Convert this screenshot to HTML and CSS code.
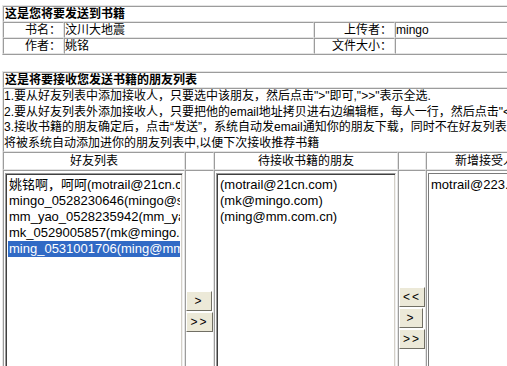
FILE: index.html
```html
<!DOCTYPE html>
<html lang="zh-CN">
<head>
  <meta charset="UTF-8">
  <title>发送书籍</title>
  <link rel="stylesheet" href="styles.css">
</head>
<body>

<table class="grid book-info">
  <colgroup><col class="c-label"><col class="c-value"><col class="c-label2"><col class="c-rest"></colgroup>
  <tr><td colspan="4" class="title">这是您将要发送到书籍</td></tr>
  <tr><td class="label">书名：</td><td>汶川大地震</td><td class="label">上传者：</td><td>mingo</td></tr>
  <tr><td class="label">作者：</td><td>姚铭</td><td class="label">文件大小：</td><td></td></tr>
</table>

<table class="grid friends">
  <colgroup><col class="c-list"><col class="c-btn"><col class="c-list2"><col class="c-btn2"><col class="c-new"></colgroup>
  <tr><td colspan="5" class="title">这是将要接收您发送书籍的朋友列表</td></tr>
  <tr><td colspan="5" class="help">1.要从好友列表中添加接收人，只要选中该朋友，然后点击"&gt;"即可,"&gt;&gt;"表示全选.<br>2.要从好友列表外添加接收人，只要把他的email地址拷贝进右边编辑框，每人一行，然后点击"&lt;"即可.<br>3.接收书籍的朋友确定后，点击“发送”，系统自动发email通知你的朋友下载，同时不在好友列表中的接收人<br>将被系统自动添加进你的朋友列表中,以便下次接收推荐书籍</td></tr>
  <tr class="heads"><td>好友列表</td><td></td><td>待接收书籍的朋友</td><td></td><td>新增接受人</td></tr>
  <tr class="lists">
    <td class="list-cell">
      <div class="listbox">
        <div class="item">姚铭啊，呵呵(motrail@21cn.com)</div>
        <div class="item">mingo_0528230646(mingo@sina.com)</div>
        <div class="item">mm_yao_0528235942(mm_yao@163.com)</div>
        <div class="item">mk_0529005857(mk@mingo.com)</div>
        <div class="item selected">ming_0531001706(ming@mm.com.cn)</div>
      </div>
    </td>
    <td class="btn-cell left-btns"><button>&gt;</button><button>&gt;&gt;</button></td>
    <td class="list-cell">
      <div class="listbox">
        <div class="item">(motrail@21cn.com)</div>
        <div class="item">(mk@mingo.com)</div>
        <div class="item">(ming@mm.com.cn)</div>
      </div>
    </td>
    <td class="btn-cell right-btns"><button>&lt;&lt;</button><button>&gt;</button><button>&gt;&gt;</button></td>
    <td class="list-cell"><div class="editbox">motrail@223.com</div></td>
  </tr>
</table>

</body>
</html>
```

FILE: styles.css
```css
body { margin: 0; padding: 5px 0 0 2px; background: #fff; color: #000; font-family: "Liberation Sans", "Noto Sans CJK SC", sans-serif; font-size: 12px; overflow: hidden; }
.grid { border-collapse: separate; border-spacing: 0; table-layout: fixed; width: 543px; border: 1px solid; border-color: #e4e4e4 #9c9c9c #9c9c9c #e4e4e4; }
.grid td { box-sizing: border-box; border: 1px solid; border-color: #9c9c9c #e4e4e4 #e4e4e4 #9c9c9c; padding: 0; line-height: 14px; white-space: nowrap; overflow: hidden; }
.grid .title { font-weight: bold; font-size: 12px; padding-left: 1px; }
.grid .label { text-align: right; padding-right: 2px; }

.book-info .c-label { width: 61px; }
.book-info .c-value { width: 250px; }
.book-info .c-label2 { width: 81px; }
.book-info .c-rest { width: 149px; }

.friends { margin-top: 16px; }
.friends .c-list { width: 182px; }
.friends .c-btn { width: 29px; }
.friends .c-list2 { width: 184px; }
.friends .c-btn2 { width: 28px; }
.friends .c-new { width: 118px; }
.friends .help { font-size: 12px; line-height: 15.5px; }
.heads td { text-align: center; line-height: 16px; }
.lists td { vertical-align: top; height: 220px; }

.list-cell { padding: 2px 1px 0 1px !important; }
.listbox { height: 220px; border: 1px solid; border-color: #9c9c9c #f0f0f0 #f0f0f0 #9c9c9c; box-shadow: inset 1px 1px #404040, inset -1px -1px #d4d0c8; padding: 3px 2px; font-size: 13px; overflow: hidden; }
.item { line-height: 16px; padding-left: 1px; white-space: nowrap; overflow: hidden; }
.item.selected { background: #316ac5; color: #fff; }
.editbox { height: 220px; border: 1px solid #7a7a7a; padding: 3px 2px; font-size: 13px; line-height: 16px; }

.btn-cell button { display: block; width: 26px; height: 20px; margin-bottom: 1px; padding: 0; background: #ece9d8; border: 1px solid; border-color: #fff #716f64 #716f64 #fff; font-family: "Liberation Sans", sans-serif; font-size: 12px; letter-spacing: 2px; color: #000; }
.left-btns { padding-top: 120px !important; }
.left-btns button + button { width: 27px; }
.right-btns { padding-top: 116px !important; }
.right-btns button:nth-child(2) { width: 24px; }
```
